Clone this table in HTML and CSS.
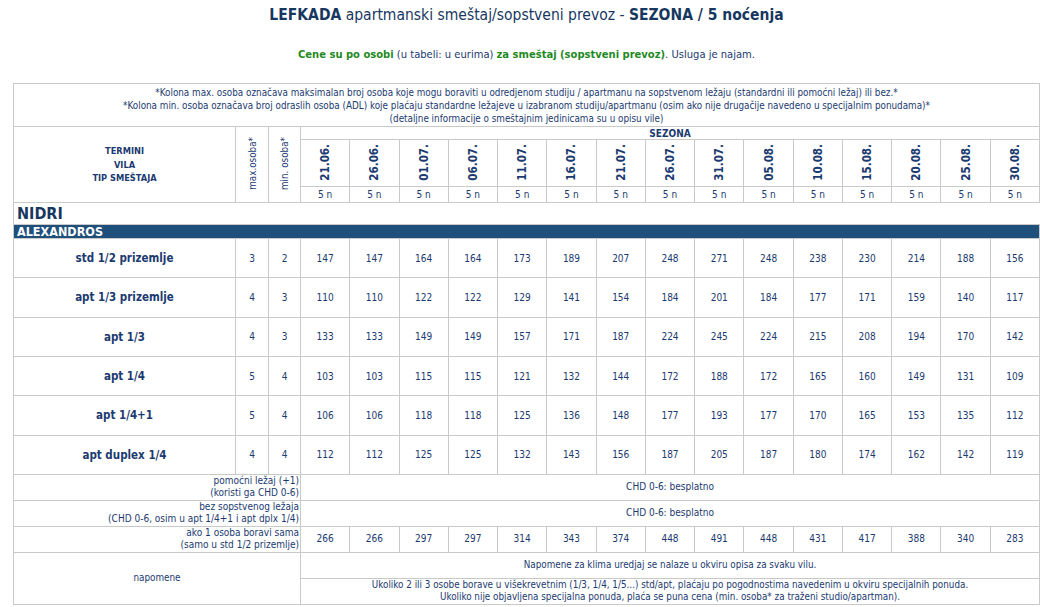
FILE: index.html
```html
<!DOCTYPE html>
<html lang="sr">
<head>
<meta charset="utf-8">
<title>LEFKADA - SEZONA / 5 noćenja</title>
<link rel="stylesheet" href="styles.css">
</head>
<body>
<div class="page">
  <h1 class="title"><b>LEFKADA</b> apartmanski smeštaj/sopstveni prevoz - <b>SEZONA / 5 noćenja</b></h1>
  <p class="subtitle"><b class="green">Cene su po osobi</b> (u tabeli: u eurima) <b class="green">za smeštaj (sopstveni prevoz)</b>. Usluga je najam.</p>
  <table class="prices">
    <colgroup>
      <col class="c-label"><col class="c-max"><col class="c-min">
      <col><col><col><col><col><col><col><col><col><col><col><col><col><col><col>
    </colgroup>
    <tbody>
      <tr class="r-notes">
        <td colspan="18" class="notes">*Kolona max. osoba označava maksimalan broj osoba koje mogu boraviti u odredjenom studiju / apartmanu na sopstvenom ležaju (standardni ili pomoćni ležaj) ili bez.*<br>*Kolona min. osoba označava broj odraslih osoba (ADL) koje plaćaju standardne ležajeve u izabranom studiju/apartmanu (osim ako nije drugačije navedeno u specijalnim ponudama)*<br>(detaljne informacije o smeštajnim jedinicama su u opisu vile)</td>
      </tr>
      <tr class="r-season">
        <th rowspan="3" class="head-label">TERMINI<br>VILA<br>TIP SMEŠTAJA</th>
        <th rowspan="3" class="vert"><span class="vtext">max.osoba*</span></th>
        <th rowspan="3" class="vert"><span class="vtext">min. osoba*</span></th>
        <th colspan="15" class="season">SEZONA</th>
      </tr>
      <tr class="r-dates">
        <th class="date"><span class="vtext">21.06.</span></th>
        <th class="date"><span class="vtext">26.06.</span></th>
        <th class="date"><span class="vtext">01.07.</span></th>
        <th class="date"><span class="vtext">06.07.</span></th>
        <th class="date"><span class="vtext">11.07.</span></th>
        <th class="date"><span class="vtext">16.07.</span></th>
        <th class="date"><span class="vtext">21.07.</span></th>
        <th class="date"><span class="vtext">26.07.</span></th>
        <th class="date"><span class="vtext">31.07.</span></th>
        <th class="date"><span class="vtext">05.08.</span></th>
        <th class="date"><span class="vtext">10.08.</span></th>
        <th class="date"><span class="vtext">15.08.</span></th>
        <th class="date"><span class="vtext">20.08.</span></th>
        <th class="date"><span class="vtext">25.08.</span></th>
        <th class="date"><span class="vtext">30.08.</span></th>
      </tr>
      <tr class="r-nights">
        <td>5 n</td><td>5 n</td><td>5 n</td><td>5 n</td><td>5 n</td><td>5 n</td><td>5 n</td><td>5 n</td><td>5 n</td><td>5 n</td><td>5 n</td><td>5 n</td><td>5 n</td><td>5 n</td><td>5 n</td>
      </tr>
      <tr class="r-place">
        <td colspan="18" class="place">NIDRI</td>
      </tr>
      <tr class="r-villa">
        <td colspan="18" class="villa">ALEXANDROS</td>
      </tr>
      <tr class="r-data">
        <th class="unit">std 1/2 prizemlje</th><td>3</td><td>2</td>
        <td>147</td><td>147</td><td>164</td><td>164</td><td>173</td><td>189</td><td>207</td><td>248</td><td>271</td><td>248</td><td>238</td><td>230</td><td>214</td><td>188</td><td>156</td>
      </tr>
      <tr class="r-data">
        <th class="unit">apt 1/3 prizemlje</th><td>4</td><td>3</td>
        <td>110</td><td>110</td><td>122</td><td>122</td><td>129</td><td>141</td><td>154</td><td>184</td><td>201</td><td>184</td><td>177</td><td>171</td><td>159</td><td>140</td><td>117</td>
      </tr>
      <tr class="r-data">
        <th class="unit">apt 1/3</th><td>4</td><td>3</td>
        <td>133</td><td>133</td><td>149</td><td>149</td><td>157</td><td>171</td><td>187</td><td>224</td><td>245</td><td>224</td><td>215</td><td>208</td><td>194</td><td>170</td><td>142</td>
      </tr>
      <tr class="r-data">
        <th class="unit">apt 1/4</th><td>5</td><td>4</td>
        <td>103</td><td>103</td><td>115</td><td>115</td><td>121</td><td>132</td><td>144</td><td>172</td><td>188</td><td>172</td><td>165</td><td>160</td><td>149</td><td>131</td><td>109</td>
      </tr>
      <tr class="r-data">
        <th class="unit">apt 1/4+1</th><td>5</td><td>4</td>
        <td>106</td><td>106</td><td>118</td><td>118</td><td>125</td><td>136</td><td>148</td><td>177</td><td>193</td><td>177</td><td>170</td><td>165</td><td>153</td><td>135</td><td>112</td>
      </tr>
      <tr class="r-data">
        <th class="unit">apt duplex 1/4</th><td>4</td><td>4</td>
        <td>112</td><td>112</td><td>125</td><td>125</td><td>132</td><td>143</td><td>156</td><td>187</td><td>205</td><td>187</td><td>180</td><td>174</td><td>162</td><td>142</td><td>119</td>
      </tr>
      <tr class="r-extra">
        <td colspan="3" class="extra-label">pomoćni ležaj (+1)<br>(koristi ga CHD 0-6)</td>
        <td colspan="15">CHD 0-6: besplatno</td>
      </tr>
      <tr class="r-extra">
        <td colspan="3" class="extra-label">bez sopstvenog ležaja<br>(CHD 0-6, osim u apt 1/4+1 i apt dplx 1/4)</td>
        <td colspan="15">CHD 0-6: besplatno</td>
      </tr>
      <tr class="r-extra">
        <td colspan="3" class="extra-label">ako 1 osoba boravi sama<br>(samo u std 1/2 prizemlje)</td>
        <td>266</td><td>266</td><td>297</td><td>297</td><td>314</td><td>343</td><td>374</td><td>448</td><td>491</td><td>448</td><td>431</td><td>417</td><td>388</td><td>340</td><td>283</td>
      </tr>
      <tr class="r-remark1">
        <td colspan="3" rowspan="2" class="remarks-label">napomene</td>
        <td colspan="15">Napomene za klima uredjaj se nalaze u okviru opisa za svaku vilu.</td>
      </tr>
      <tr class="r-remark2">
        <td colspan="15">Ukoliko 2 ili 3 osobe borave u višekrevetnim (1/3, 1/4, 1/5...) std/apt, plaćaju po pogodnostima navedenim u okviru specijalnih ponuda.<br>Ukoliko nije objavljena specijalna ponuda, plaća se puna cena (min. osoba* za traženi studio/apartman).</td>
      </tr>
    </tbody>
  </table>
</div>
</body>
</html>
```

FILE: styles.css
```css
html, body {
  margin: 0;
  padding: 0;
  background: #ffffff;
}

body {
  font-family: "DejaVu Sans Condensed", "DejaVu Sans", Verdana, sans-serif;
  font-stretch: condensed;
  color: #1b3a70;
  overflow: hidden;
}

.page {
  width: 1027px;
  margin-left: 13px;
}

.title {
  margin: 0;
  padding-top: 5px;
  height: 26px;
  font-size: 15.5px;
  font-weight: normal;
  line-height: 20px;
  text-align: center;
  color: #17375f;
}

.title b {
  font-weight: bold;
}

.subtitle {
  margin: 0;
  padding-top: 16px;
  height: 36px;
  font-size: 11.1px;
  line-height: 16px;
  text-align: center;
  color: #1b3a70;
}

.green {
  color: #1f8a1f;
}

.prices {
  width: 1027px;
  table-layout: fixed;
  border-collapse: collapse;
  font-size: 10px;
  color: #1b3a70;
}

.c-label { width: 222px; }
.c-max { width: 33px; }
.c-min { width: 32px; }

.prices td,
.prices th {
  border: 1px solid #c9c9c9;
  padding: 0;
  text-align: center;
  vertical-align: middle;
  font-weight: normal;
}

.r-notes { height: 43px; }

.prices td.notes {
  font-size: 9.8px;
  line-height: 13px;
  padding-top: 1px;
}

.r-season { height: 13px; }
.r-dates { height: 47px; }
.r-nights { height: 16px; }

.prices th.head-label {
  font-weight: bold;
  font-size: 9.2px;
  line-height: 13.5px;
}

.vtext {
  display: inline-block;
  writing-mode: vertical-rl;
  transform: rotate(180deg);
  white-space: nowrap;
}

.prices th.vert .vtext {
  font-size: 9.8px;
}

.prices th.season {
  font-weight: bold;
  font-size: 10px;
  line-height: 11px;
}

.prices th.date .vtext {
  font-weight: bold;
  font-size: 11.5px;
  line-height: 14px;
}

.r-nights td {
  font-size: 10px;
  line-height: 14px;
}

.r-place { height: 22px; }

.prices td.place {
  text-align: left;
  font-size: 16px;
  font-weight: bold;
  padding-left: 3px;
  border-right: 0;
  color: #17375f;
}

.r-villa { height: 14px; }

.prices td.villa {
  background: #1f4f7b;
  color: #ffffff;
  text-align: left;
  font-size: 12.5px;
  font-weight: bold;
  line-height: 12px;
  padding-left: 3px;
}

.r-data { height: 39.33px; }

.r-data td {
  font-size: 10px;
}

.prices th.unit {
  font-weight: bold;
  font-size: 11.5px;
}

.r-extra { height: 26px; }

.prices td.extra-label {
  text-align: right;
  padding-right: 1px;
}

.r-extra td {
  font-size: 10px;
  line-height: 12px;
}

.r-remark1 { height: 26px; }
.r-remark2 { height: 26px; }

.remarks-label,
.r-remark1 td,
.r-remark2 td {
  font-size: 9.8px;
  line-height: 12.5px;
}
```
